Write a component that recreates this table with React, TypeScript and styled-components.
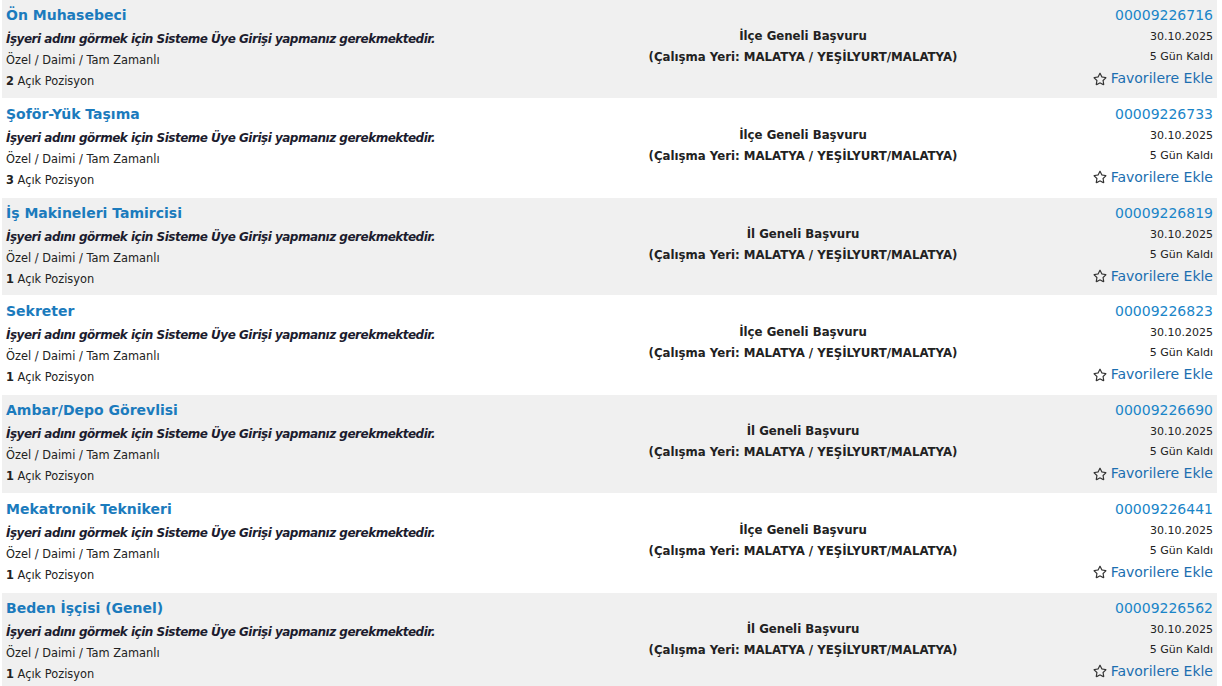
import styled, { createGlobalStyle } from "styled-components";
import { FaRegStar } from "react-icons/fa";

const GlobalStyle = createGlobalStyle`
  html, body {
    margin: 0;
    padding: 0;
    background: #ffffff;
  }
  body {
    font-family: "DejaVu Sans", Verdana, sans-serif;
    color: #222;
  }
`;

type Job = {
  title: string;
  positions: number;
  scope: string;
  code: string;
};

const jobs: Job[] = [
  { title: "Ön Muhasebeci", positions: 2, scope: "İlçe Geneli Başvuru", code: "00009226716" },
  { title: "Şoför-Yük Taşıma", positions: 3, scope: "İlçe Geneli Başvuru", code: "00009226733" },
  { title: "İş Makineleri Tamircisi", positions: 1, scope: "İl Geneli Başvuru", code: "00009226819" },
  { title: "Sekreter", positions: 1, scope: "İlçe Geneli Başvuru", code: "00009226823" },
  { title: "Ambar/Depo Görevlisi", positions: 1, scope: "İl Geneli Başvuru", code: "00009226690" },
  { title: "Mekatronik Teknikeri", positions: 1, scope: "İlçe Geneli Başvuru", code: "00009226441" },
  { title: "Beden İşçisi (Genel)", positions: 1, scope: "İl Geneli Başvuru", code: "00009226562" },
];

// list wrapper
const JobList = styled.div`
  display: flex;
  flex-direction: column;
  width: 1215px;
  margin-left: 2px;
`;

const JobRow = styled.div<{ $odd: boolean }>`
  display: grid;
  grid-template-columns: 588px 426px 1fr;
  height: 98.8px;
  box-sizing: border-box;
  background: ${(p) => (p.$odd ? "#f0f0f0" : "#ffffff")};
  border-bottom: 1px solid #fff;
`;

const LeftCell = styled.div`
  display: flex;
  flex-direction: column;
  padding: 5px 0 0 4px;
`;

const Title = styled.a`
  font-size: 14px;
  font-weight: bold;
  color: #1b7bbd;
  text-decoration: none;
  line-height: 20px;
  height: 20px;
  margin-bottom: 4px;
`;

const Notice = styled.div`
  font-size: 12px;
  font-weight: bold;
  font-style: italic;
  letter-spacing: -0.5px;
  color: #1c1c2e;
  line-height: 20px;
  height: 21px;
`;

const SmallLine = styled.div`
  font-size: 11.4px;
  line-height: 21px;
  color: #222;

  b {
    font-weight: bold;
  }
`;

const CenterCell = styled.div`
  display: flex;
  flex-direction: column;
  align-items: center;
  padding-top: 26px;
  font-size: 11.75px;
  font-weight: bold;
  color: #222;
  line-height: 21px;
`;

const RightCell = styled.div`
  display: flex;
  flex-direction: column;
  align-items: flex-end;
  padding: 5px 4px 0 0;
`;

const Code = styled.a`
  font-size: 14px;
  color: #1a85c8;
  text-decoration: none;
  line-height: 20px;
  margin-bottom: 2px;
`;

const Meta = styled.div`
  font-size: 11px;
  color: #222;
  line-height: 20px;
`;

const FavButton = styled.a`
  display: flex;
  align-items: center;
  gap: 4px;
  margin-top: 1px;
  font-size: 14px;
  color: #1c6fb0;
  line-height: 21px;
  cursor: pointer;

  svg {
    color: #333;
  }
`;

const App = () => {
  return (
    <>
      <GlobalStyle />
      <JobList>
        {jobs.map((job, i) => (
          <JobRow key={job.code} $odd={i % 2 === 0}>
            <LeftCell>
              <Title href="#">{job.title}</Title>
              <Notice>İşyeri adını görmek için Sisteme Üye Girişi yapmanız gerekmektedir.</Notice>
              <SmallLine>Özel / Daimi / Tam Zamanlı</SmallLine>
              <SmallLine>
                <b>{job.positions}</b> Açık Pozisyon
              </SmallLine>
            </LeftCell>
            <CenterCell>
              <div>{job.scope}</div>
              <div>(Çalışma Yeri: MALATYA / YEŞİLYURT/MALATYA)</div>
            </CenterCell>
            <RightCell>
              <Code href="#">{job.code}</Code>
              <Meta>30.10.2025</Meta>
              <Meta>5 Gün Kaldı</Meta>
              <FavButton>
                <FaRegStar size={14} />
                Favorilere Ekle
              </FavButton>
            </RightCell>
          </JobRow>
        ))}
      </JobList>
    </>
  );
};

export default App;
